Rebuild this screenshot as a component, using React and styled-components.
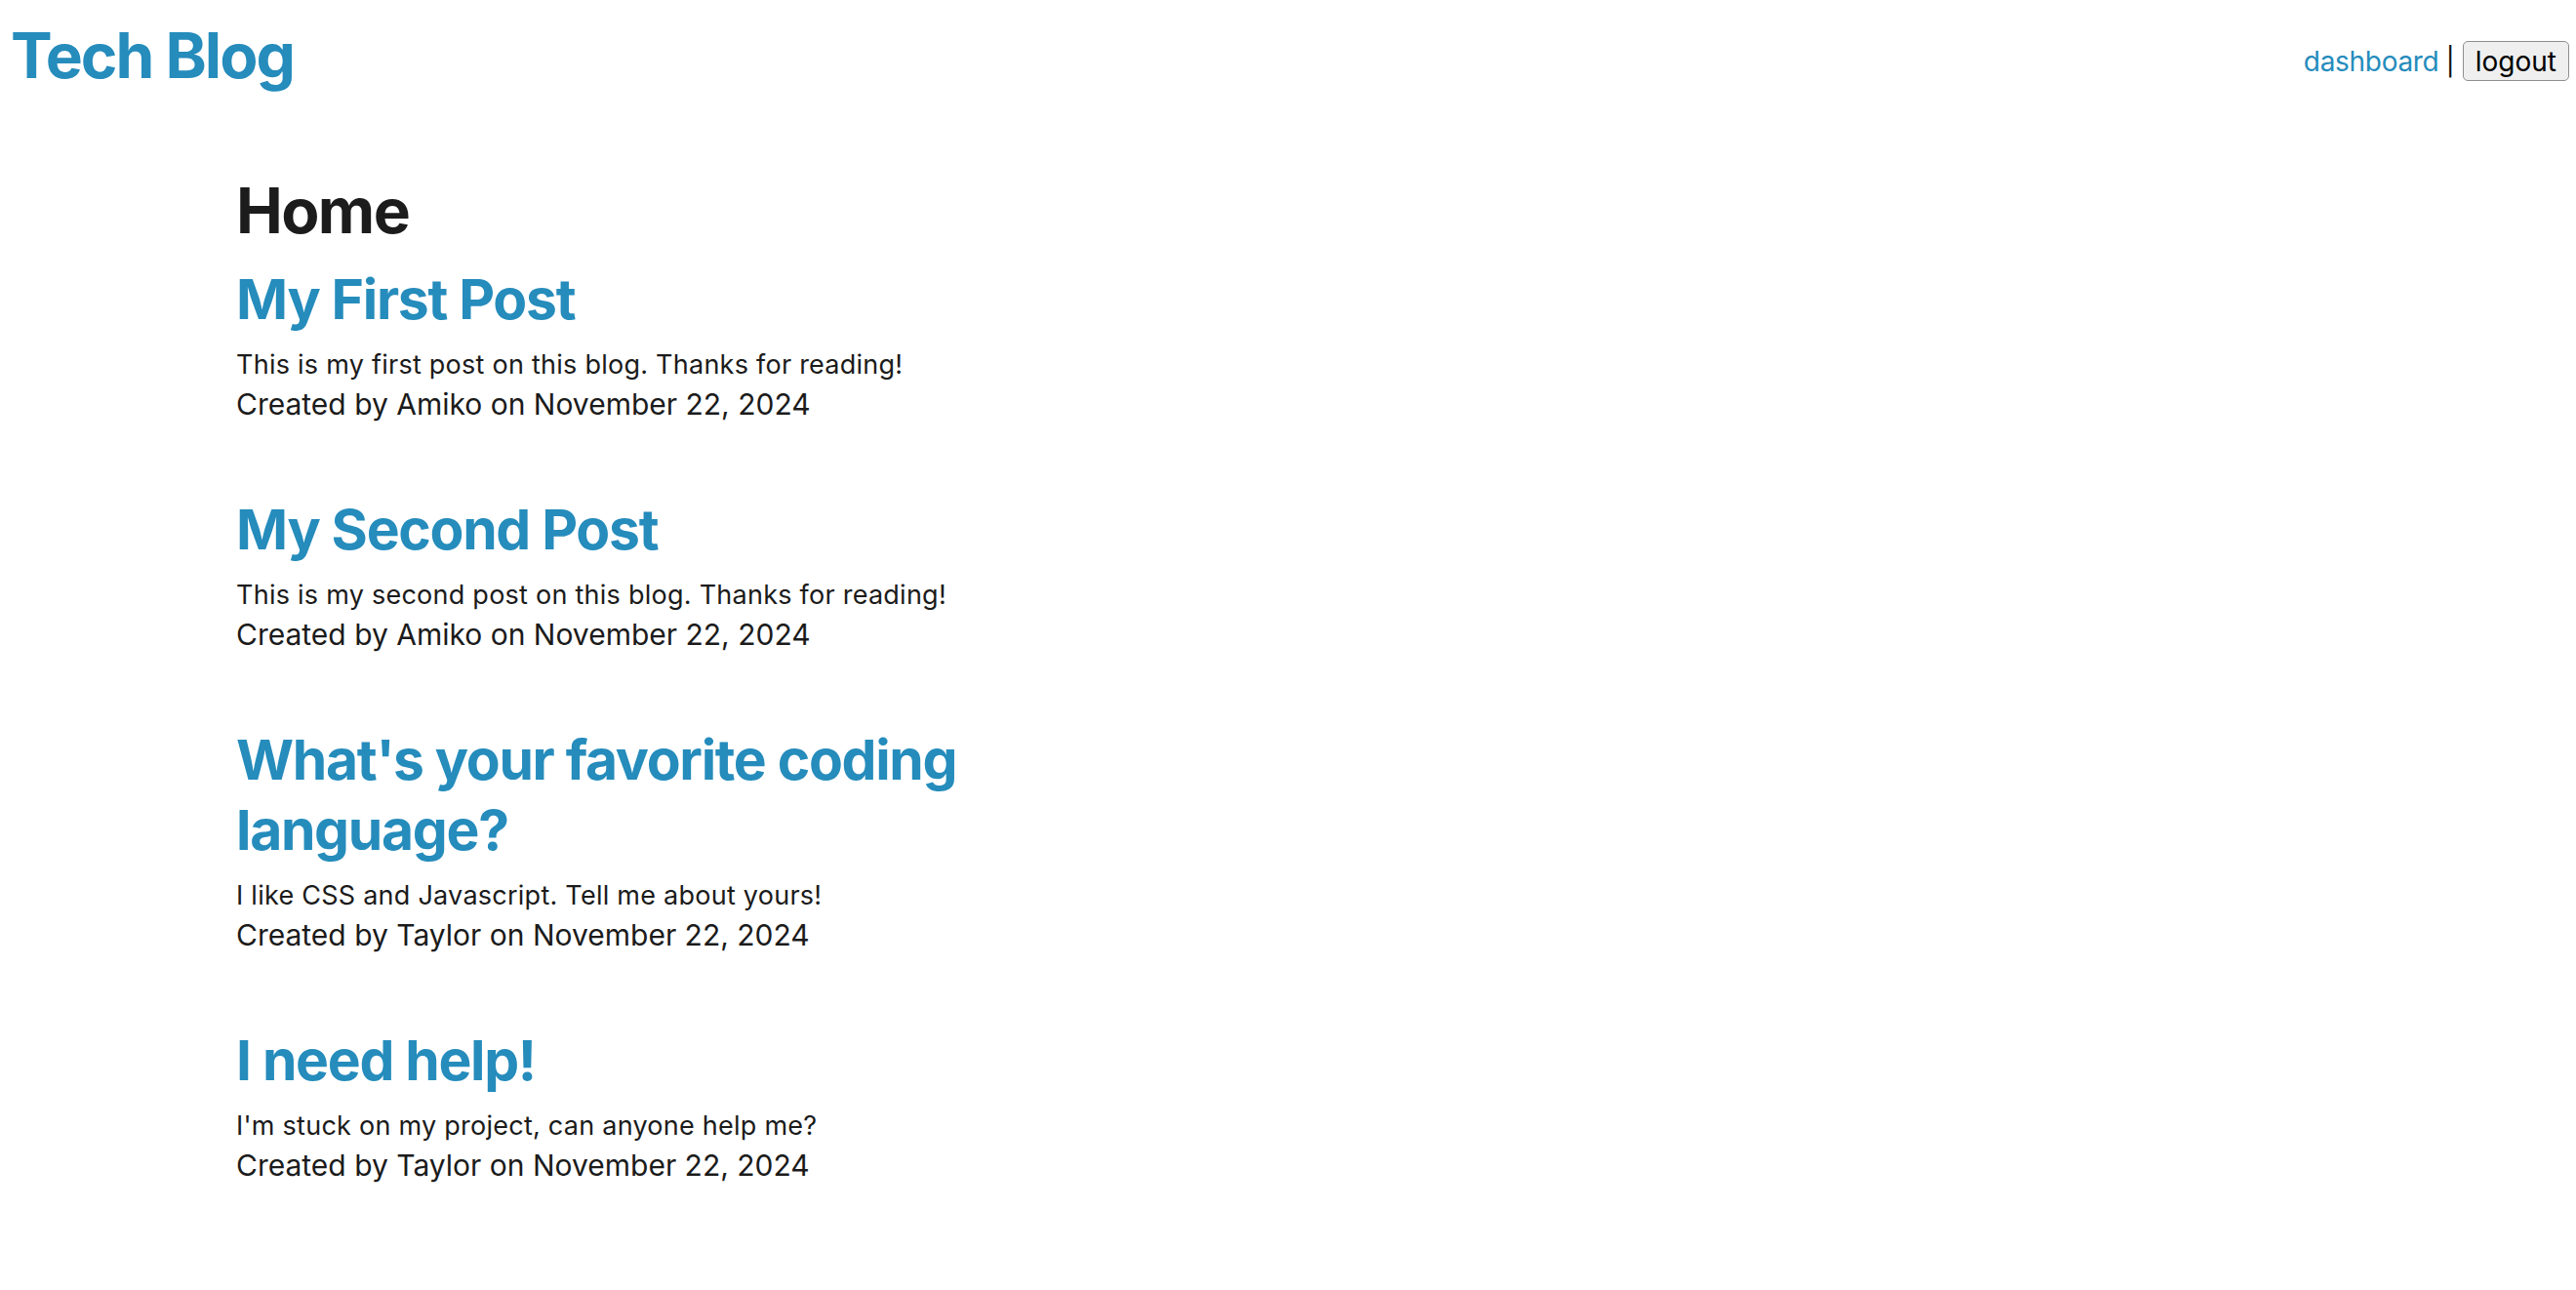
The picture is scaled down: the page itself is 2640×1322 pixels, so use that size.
import React from 'react';
import styled, { createGlobalStyle } from 'styled-components';

const GlobalStyle = createGlobalStyle`
  html, body {
    margin: 0;
    padding: 0;
    background: #ffffff;
  }
  body {
    font-family: Inter, "Noto Sans", "Liberation Sans", sans-serif;
    color: #1b1b1b;
  }
`

const Header = styled.header`
  display: flex;
  justify-content: space-between;
  align-items: flex-start;
  padding: 17px 7px 0 11px;
`

const Logo = styled.h1`
  margin: 0;
  font-size: 64px;
  line-height: 80px;
  font-weight: 700;
  color: #258cbc;
  letter-spacing: -2px;
`

const Nav = styled.nav`
  display: flex;
  align-items: center;
  margin-top: 25px;
  font-size: 28px;
  line-height: 34px;
`

const NavLink = styled.a`
  color: #258cbc;
  text-decoration: none;
  letter-spacing: -0.3px;
  cursor: pointer;
`

const Pipe = styled.span`
  margin: 0 8px 0 7px;
  color: #111;
`

const LogoutButton = styled.button`
  height: 41px;
  padding: 0 12px;
  font-family: inherit;
  font-size: 28px;
  color: #000;
  background: #efefef;
  border: 1px solid #8f8f8f;
  border-radius: 5px;
  cursor: pointer;
`

const Main = styled.main`
  padding: 79px 0 60px 242px;
  width: 880px;
`

const PageTitle = styled.h1`
  margin: 0;
  font-size: 64px;
  line-height: 80px;
  font-weight: 700;
  color: #1c1c1c;
  letter-spacing: -1.6px;
`

const PostList = styled.div`
  display: flex;
  flex-direction: column;
  gap: 73px;
  margin-top: 15px;
`

const Post = styled.article`
  display: flex;
  flex-direction: column;
`

const PostTitle = styled.h2`
  margin: 0 0 10px;
  font-size: 57px;
  line-height: 72px;
  font-weight: 700;
  color: #258cbc;
  letter-spacing: -1.3px;
`

const PostBody = styled.p`
  margin: 0;
  font-size: 27px;
  line-height: 41px;
  letter-spacing: 0.25px;
  color: #1b1b1b;
`

const PostMeta = styled.p`
  margin: 0;
  font-size: 30px;
  line-height: 40px;
  color: #1b1b1b;
`

const posts = [
  { title: 'My First Post', body: 'This is my first post on this blog. Thanks for reading!', author: 'Amiko' },
  { title: 'My Second Post', body: 'This is my second post on this blog. Thanks for reading!', author: 'Amiko' },
  { title: "What's your favorite coding language?", body: 'I like CSS and Javascript. Tell me about yours!', author: 'Taylor' },
  { title: 'I need help!', body: "I'm stuck on my project, can anyone help me?", author: 'Taylor' },
]

export default function App() {
  return (
    <>
      <GlobalStyle />
      <Header>
        <Logo>Tech Blog</Logo>
        <Nav>
          <NavLink>dashboard</NavLink>
          <Pipe>|</Pipe>
          <LogoutButton>logout</LogoutButton>
        </Nav>
      </Header>
      <Main>
        <PageTitle>Home</PageTitle>
        <PostList>
          {posts.map(post => (
            <Post key={post.title}>
              <PostTitle>{post.title}</PostTitle>
              <PostBody>{post.body}</PostBody>
              <PostMeta>Created by {post.author} on November 22, 2024</PostMeta>
            </Post>
          ))}
        </PostList>
      </Main>
    </>
  )
}
